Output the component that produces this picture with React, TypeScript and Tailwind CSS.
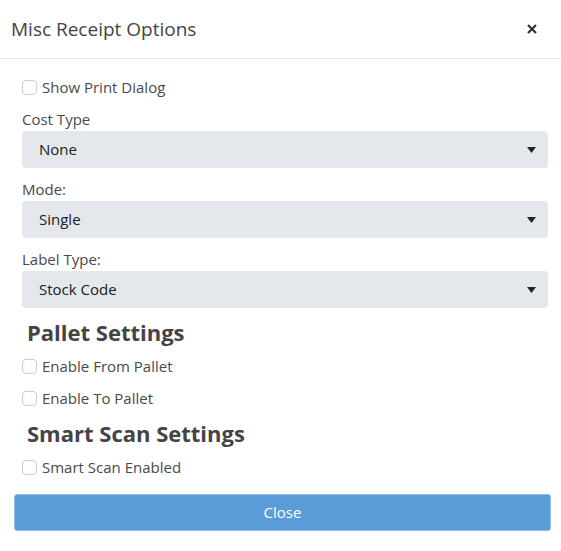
import React from "react";

function Check({ label }: { label: string }) {
  return (
    <label className="flex items-center h-[20px]">
      <span className="w-[15px] h-[15px] rounded-[4px] border border-[#c9ccd1] bg-white mr-[5px]" />
      <span className="text-[15px] text-[#4a4a4a]">{label}</span>
    </label>
  );
}

function Select({ value }: { value: string }) {
  return (
    <div className="h-[37px] rounded-[4px] bg-[#e4e7eb] flex items-center justify-between pl-[17px] pr-[12px]">
      <span className="text-[15px] text-[#212121]">{value}</span>
      <svg width="9" height="6" viewBox="0 0 9 6"><path d="M0 0h9L4.5 6z" fill="#222" /></svg>
    </div>
  );
}

export default function App() {
  return (
    <div className="w-[561px] h-[551px] bg-white" style={{ fontFamily: '"Open Sans", "Noto Sans", sans-serif' }}>
      <div className="h-[59px] border-b border-[#e5e5e5] flex items-center justify-between pl-[11px] pr-[22px]">
        <span className="text-[19px] text-[#444]">Misc Receipt Options</span>
        <svg width="10" height="10" viewBox="0 0 10 10" className="mr-[2px]">
          <path d="M1 1L9 9M9 1L1 9" stroke="#333" strokeWidth="2.2" />
        </svg>
      </div>
      <div className="pl-[22px] pr-[13px] pt-[18px]">
        <Check label="Show Print Dialog" />
        <div className="mt-[12px] text-[15px] text-[#4a4a4a] h-[20px] leading-[20px]">Cost Type</div>
        <div className="mt-[2px]"><Select value="None" /></div>
        <div className="mt-[11px] text-[15px] text-[#4a4a4a] h-[20px] leading-[20px]">Mode:</div>
        <div className="mt-[2px]"><Select value="Single" /></div>
        <div className="mt-[11px] text-[15px] text-[#4a4a4a] h-[20px] leading-[20px]">Label Type:</div>
        <div className="mt-[2px]"><Select value="Stock Code" /></div>
        <div className="mt-[10px] pl-[5px] text-[22px] font-bold text-[#444] h-[28px] leading-[28px]">Pallet Settings</div>
        <div className="mt-[10px]"><Check label="Enable From Pallet" /></div>
        <div className="mt-[12px]"><Check label="Enable To Pallet" /></div>
        <div className="mt-[11px] pl-[5px] text-[22px] font-bold text-[#444] h-[28px] leading-[28px]">Smart Scan Settings</div>
        <div className="mt-[10px]"><Check label="Smart Scan Enabled" /></div>
      </div>
      <div className="pl-[14px] pr-[10px] mt-[17px]">
        <button className="w-full h-[37px] rounded-[3px] bg-[#5b9bd8] border border-[#8fbbe6] text-white text-[15px]">Close</button>
      </div>
    </div>
  );
}
